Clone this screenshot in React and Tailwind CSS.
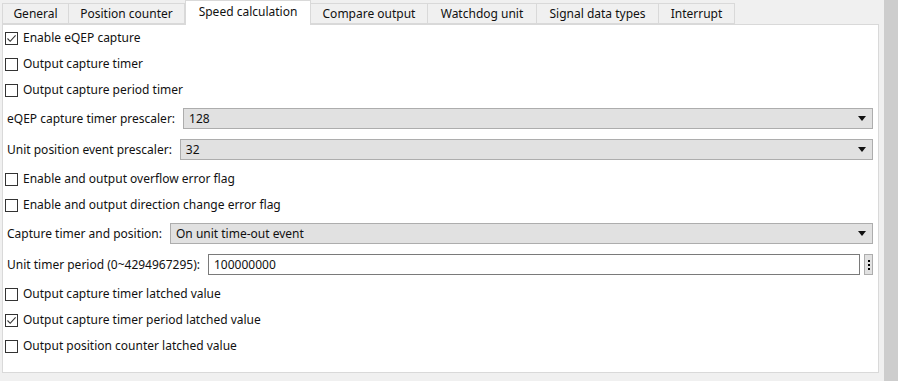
import React from 'react';

const tabs = [
    { label: 'General', w: 'w-[67px]' },
    { label: 'Position counter', w: 'w-[116px]' },
    { label: 'Speed calculation', w: 'w-[126px]', active: true },
    { label: 'Compare output', w: 'w-[117px]' },
    { label: 'Watchdog unit', w: 'w-[109px]' },
    { label: 'Signal data types', w: 'w-[122px]' },
    { label: 'Interrupt', w: 'w-[76px]' },
];

const Check = ({ checked, label }) => (
    <div className="flex items-center h-[26px] pl-[2px]">
        <span className="w-[13px] h-[13px] border border-[#333333] bg-white flex items-center justify-center">
            {checked && (
                <svg width="11" height="11" viewBox="0 0 11 11">
                    <path d="M1.5 5.5 L4.2 8.3 L9.6 2.4" fill="none" stroke="#333333" strokeWidth="1.1" />
                </svg>
            )}
        </span>
        <span className="ml-[5px]">{label}</span>
    </div>
);

const Dropdown = ({ label, value }) => (
    <div className="flex items-center h-[31px] pl-[4px] pr-[5px]">
        <span className="whitespace-nowrap">{label}</span>
        <div className="ml-[8px] flex-1 h-[21px] bg-[#e1e1e1] border border-[#adadad] flex items-center pl-[5px] pr-[6px]">
            <span className="flex-1">{value}</span>
            <svg width="8" height="5" viewBox="0 0 8 5">
                <path d="M0 0 H8 L4 5 Z" fill="#111111" />
            </svg>
        </div>
    </div>
);

export default function App() {
    return (
        <div className="w-[898px] h-[381px] bg-[#f0f0f0] flex text-[12px] text-[#111111] overflow-hidden" style={{ fontFamily: '"Noto Sans", "Open Sans", sans-serif' }}>
            <div className="w-[884px] flex flex-col pl-[2px]">
                <div className="flex items-end h-[24px]">
                    {tabs.map((t) =>
                        t.active ? (
                            <div key={t.label} className={`${t.w} h-[25px] bg-white border border-b-0 border-[#d9d9d9] flex items-center justify-center -mb-px relative z-10 pb-[3px]`}>
                                {t.label}
                            </div>
                        ) : (
                            <div key={t.label} className={`${t.w} h-[21px] bg-[#f0f0f0] border border-[#d9d9d9] border-l-0 first:border-l flex items-center justify-center`}>
                                {t.label}
                            </div>
                        )
                    )}
                </div>
                <div className="w-[877px] h-[349px] bg-white border border-[#d9d9d9]">
                    <Check checked label="Enable eQEP capture" />
                    <Check label="Output capture timer" />
                    <Check label="Output capture period timer" />
                    <Dropdown label="eQEP capture timer prescaler:" value="128" />
                    <Dropdown label="Unit position event prescaler:" value="32" />
                    <div className="h-[1px]" />
                    <Check label="Enable and output overflow error flag" />
                    <Check label="Enable and output direction change error flag" />
                    <Dropdown label="Capture timer and position:" value="On unit time-out event" />
                    <div className="flex items-center h-[31px] pl-[4px] pr-[5px]">
                        <span className="whitespace-nowrap">Unit timer period (0~4294967295):</span>
                        <div className="ml-[8px] flex-1 h-[21px] bg-white border border-[#7a7a7a] flex items-center pl-[5px]">
                            100000000
                        </div>
                        <div className="ml-[4px] w-[9px] h-[21px] bg-[#e1e1e1] border border-[#adadad] flex flex-col items-center justify-center gap-[2px]">
                            <span className="w-[2px] h-[2px] bg-black" />
                            <span className="w-[2px] h-[2px] bg-black" />
                            <span className="w-[2px] h-[2px] bg-black" />
                        </div>
                    </div>
                    <div className="h-[1px]" />
                    <Check label="Output capture timer latched value" />
                    <Check checked label="Output capture timer period latched value" />
                    <Check label="Output position counter latched value" />
                </div>
            </div>
            <div className="w-[14px] h-[381px] bg-[#cdcdcd]" />
        </div>
    );
}
